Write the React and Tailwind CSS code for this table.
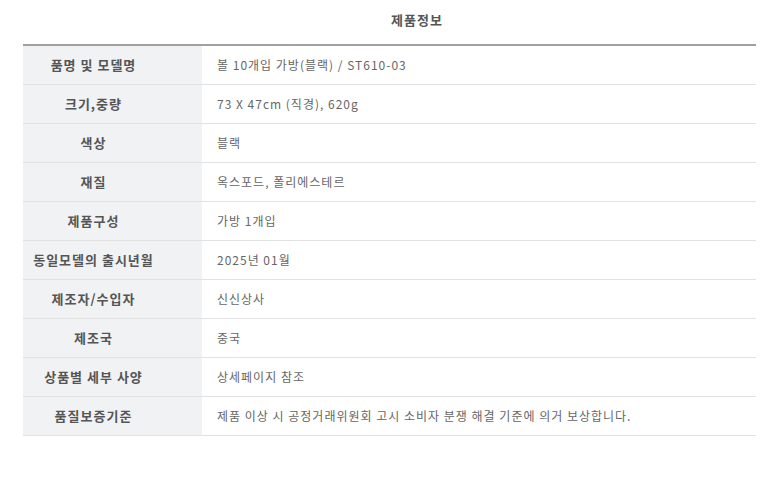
const rows = [
  ['품명 및 모델명', '볼 10개입 가방(블랙) / ST610-03'],
  ['크기,중량', '73 X 47cm (직경), 620g'],
  ['색상', '블랙'],
  ['재질', '옥스포드, 폴리에스테르'],
  ['제품구성', '가방 1개입'],
  ['동일모델의 출시년월', '2025년 01월'],
  ['제조자/수입자', '신신상사'],
  ['제조국', '중국'],
  ['상품별 세부 사양', '상세페이지 참조'],
  ['품질보증기준', '제품 이상 시 공정거래위원회 고시 소비자 분쟁 해결 기준에 의거 보상합니다.'],
];

const App = () => {
  return (
    <div className="w-[780px] h-[491px] bg-white font-['Noto_Sans_CJK_KR','Noto_Sans',sans-serif]">
      {/* Title */}
      <div className="pt-[10px] h-[44px] pl-[391px]">
        <h2 className="text-[13px] leading-[20px] font-bold tracking-[1px] text-[#555]">제품정보</h2>
      </div>

      {/* Info table */}
      <div className="mx-[23px] w-[733px] border-t-2 border-[#a0a0a0]">
        {rows.map(([label, value]) => (
          <div key={label} className="flex h-[39px] border-b border-[#e2e2e2]">
            <div className="w-[179px] bg-[#f1f2f4] flex items-center justify-center pr-[38px] text-[13px] font-bold tracking-[1px] text-[#555]">
              {label}
            </div>
            <div className="flex-1 flex items-center pl-[15px] text-[12px] tracking-[1px] text-[#666]">
              {value}
            </div>
          </div>
        ))}
      </div>
    </div>
  );
};

export default App;
